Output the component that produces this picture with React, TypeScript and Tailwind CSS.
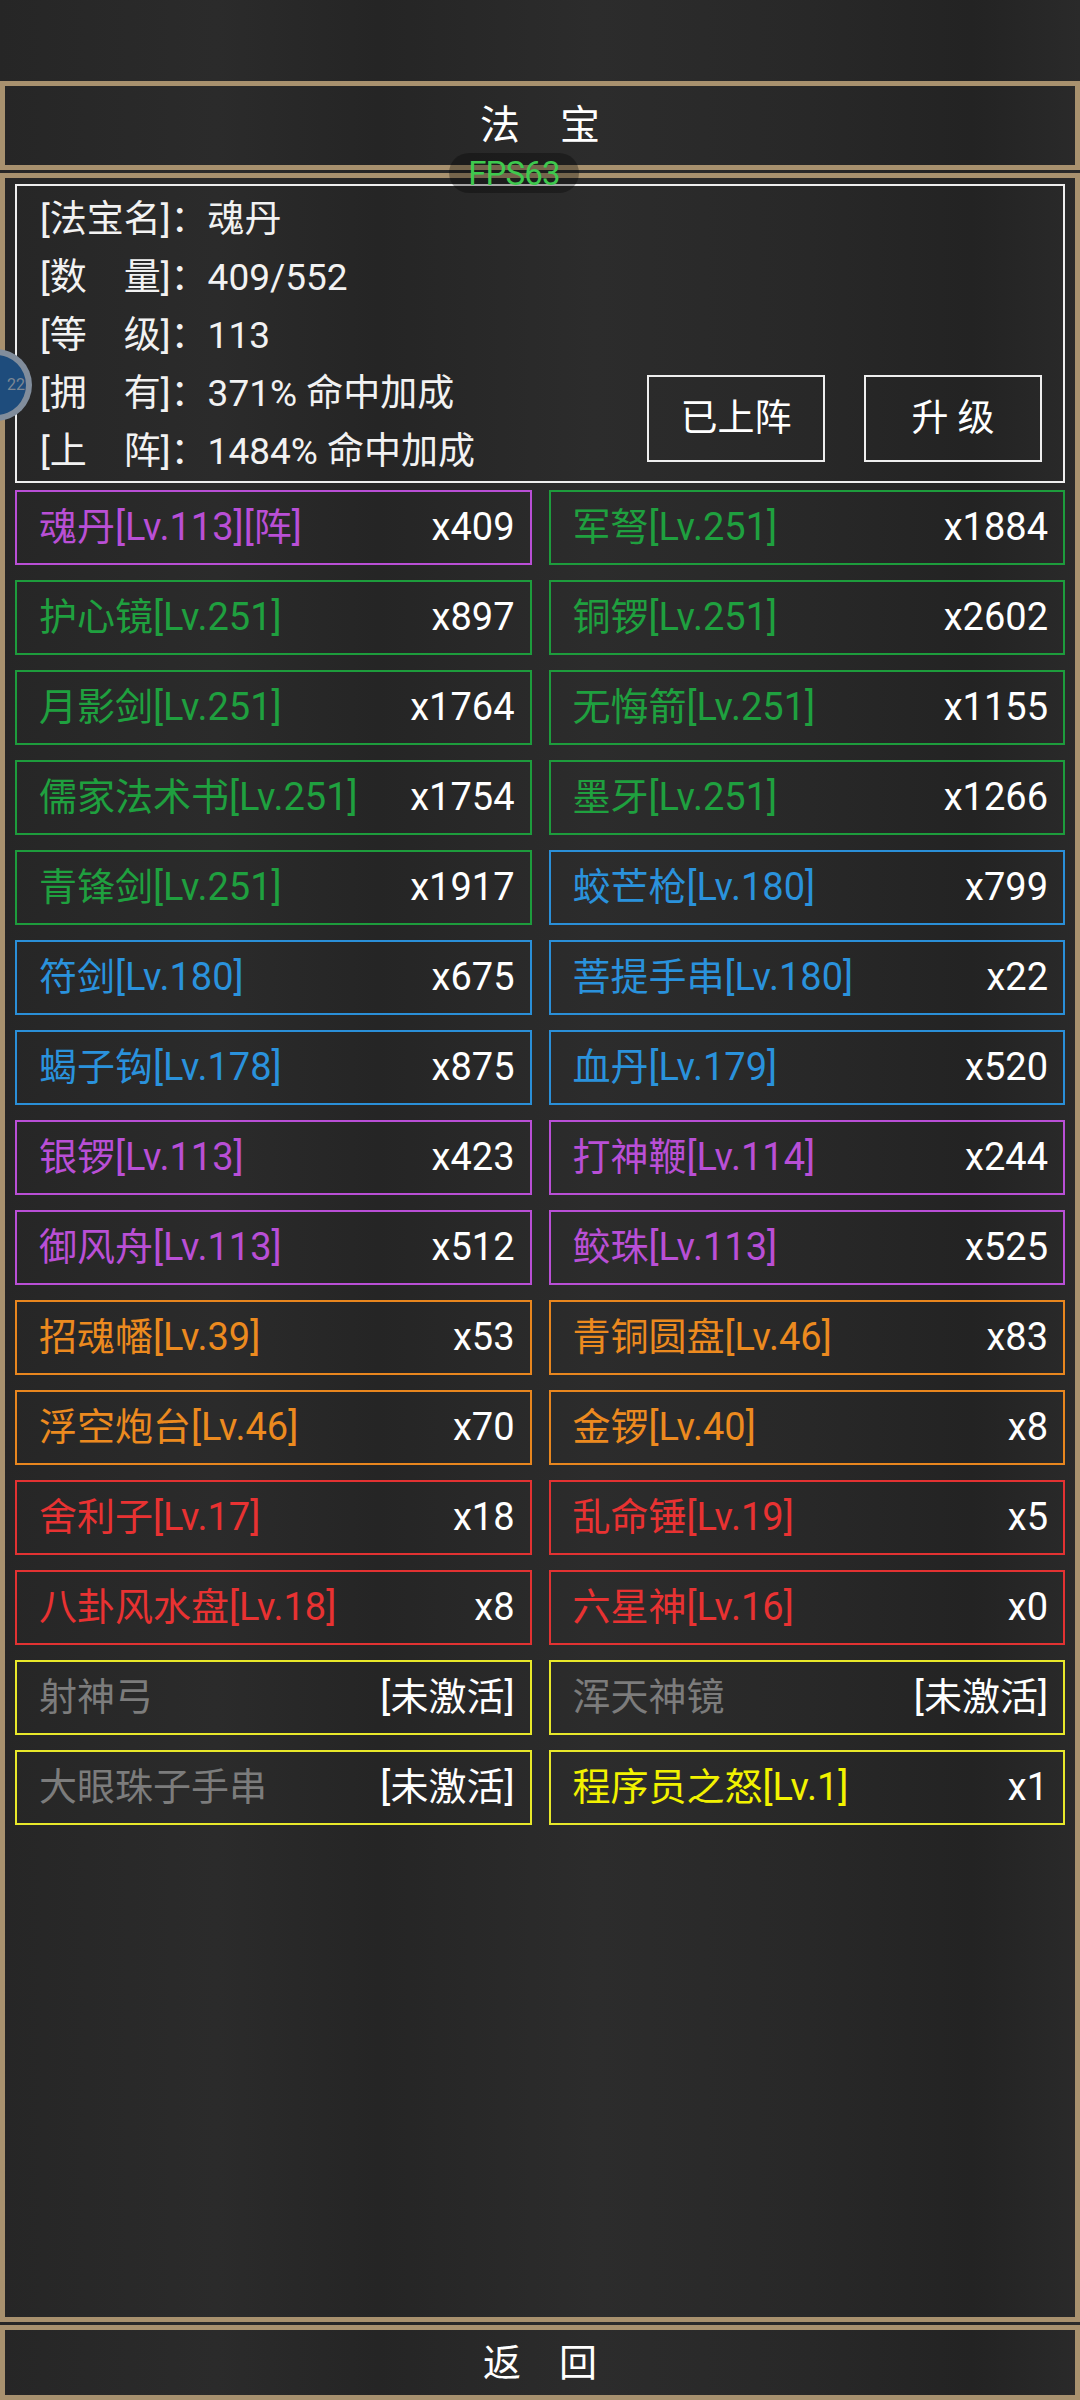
import React from 'react';

type Tier = 'purple' | 'green' | 'blue' | 'orange' | 'red' | 'yellow';

interface Item {
  name: string;
  count: string;
  tier: Tier;
  inactive?: boolean;
}

const TIER_CLASS: Record<Tier, { border: string; text: string }> = {
  purple: { border: 'border-[#b94fd6]', text: 'text-[#b94fd6]' },
  green: { border: 'border-[#1d9c3c]', text: 'text-[#1fa03f]' },
  blue: { border: 'border-[#2a8fd8]', text: 'text-[#2a92dc]' },
  orange: { border: 'border-[#e8861e]', text: 'text-[#ec8a1f]' },
  red: { border: 'border-[#e23232]', text: 'text-[#e83232]' },
  yellow: { border: 'border-[#e8e82a]', text: 'text-[#f2f200]' },
};

const ITEMS: Item[] = [
  { name: '魂丹[Lv.113][阵]', count: 'x409', tier: 'purple' },
  { name: '军弩[Lv.251]', count: 'x1884', tier: 'green' },
  { name: '护心镜[Lv.251]', count: 'x897', tier: 'green' },
  { name: '铜锣[Lv.251]', count: 'x2602', tier: 'green' },
  { name: '月影剑[Lv.251]', count: 'x1764', tier: 'green' },
  { name: '无悔箭[Lv.251]', count: 'x1155', tier: 'green' },
  { name: '儒家法术书[Lv.251]', count: 'x1754', tier: 'green' },
  { name: '墨牙[Lv.251]', count: 'x1266', tier: 'green' },
  { name: '青锋剑[Lv.251]', count: 'x1917', tier: 'green' },
  { name: '蛟芒枪[Lv.180]', count: 'x799', tier: 'blue' },
  { name: '符剑[Lv.180]', count: 'x675', tier: 'blue' },
  { name: '菩提手串[Lv.180]', count: 'x22', tier: 'blue' },
  { name: '蝎子钩[Lv.178]', count: 'x875', tier: 'blue' },
  { name: '血丹[Lv.179]', count: 'x520', tier: 'blue' },
  { name: '银锣[Lv.113]', count: 'x423', tier: 'purple' },
  { name: '打神鞭[Lv.114]', count: 'x244', tier: 'purple' },
  { name: '御风舟[Lv.113]', count: 'x512', tier: 'purple' },
  { name: '鲛珠[Lv.113]', count: 'x525', tier: 'purple' },
  { name: '招魂幡[Lv.39]', count: 'x53', tier: 'orange' },
  { name: '青铜圆盘[Lv.46]', count: 'x83', tier: 'orange' },
  { name: '浮空炮台[Lv.46]', count: 'x70', tier: 'orange' },
  { name: '金锣[Lv.40]', count: 'x8', tier: 'orange' },
  { name: '舍利子[Lv.17]', count: 'x18', tier: 'red' },
  { name: '乱命锤[Lv.19]', count: 'x5', tier: 'red' },
  { name: '八卦风水盘[Lv.18]', count: 'x8', tier: 'red' },
  { name: '六星神[Lv.16]', count: 'x0', tier: 'red' },
  { name: '射神弓', count: '[未激活]', tier: 'yellow', inactive: true },
  { name: '浑天神镜', count: '[未激活]', tier: 'yellow', inactive: true },
  { name: '大眼珠子手串', count: '[未激活]', tier: 'yellow', inactive: true },
  { name: '程序员之怒[Lv.1]', count: 'x1', tier: 'yellow' },
];

const INFO = [
  '[法宝名]：魂丹',
  '[数　量]：409/552',
  '[等　级]：113',
  '[拥　有]：371% 命中加成',
  '[上　阵]：1484% 命中加成',
];

const FONT = { fontFamily: 'Roboto, "Noto Sans CJK SC", sans-serif' };

export default function App() {
  return (
    <div
      className="relative w-[1080px] h-[2400px] overflow-hidden flex flex-col bg-[#2a2a2a] bg-[linear-gradient(90deg,#262626_0%,#2b2b2b_20%,#252525_35%,#2c2c2c_55%,#282828_75%,#232323_90%,#2a2a2a_100%)] text-[#f2f2f2]"
      style={FONT}
    >
      <div className="h-[81px] shrink-0" />

      {/* header */}
      <div className="h-[89px] shrink-0 border-[5px] border-[#a8916e] flex items-center justify-center">
        <span className="text-[40px] leading-none text-white">法　宝</span>
      </div>

      <div className="h-[3px] shrink-0" />

      {/* main panel */}
      <div className="h-[2149px] shrink-0 border-[5px] border-[#a8916e] px-[10px] pt-[6px]">
        <div className="h-[299px] border-2 border-[#eeeeee] flex">
          <div className="flex-1 pt-[5px] pl-[23px] text-[37px] leading-[58px]">
            {INFO.map(line => (
              <div key={line} className="whitespace-pre">{line}</div>
            ))}
          </div>
          <div className="flex items-end gap-[39px] pr-[21px] pb-[19px]">
            <button className="w-[178px] h-[87px] border-2 border-[#eeeeee] text-[37px] text-white">已上阵</button>
            <button className="w-[178px] h-[87px] border-2 border-[#eeeeee] text-[37px] text-white">升 级</button>
          </div>
        </div>

        <div className="mt-[7px] grid grid-cols-2 gap-x-[17px] gap-y-[15px]">
          {ITEMS.map(item => {
            const c = TIER_CLASS[item.tier];
            return (
              <div
                key={item.name}
                className={`h-[75px] border-2 ${c.border} flex items-center justify-between pl-[22px] pr-[15px] text-[38px]`}
              >
                <span className={item.inactive ? 'text-[#7c7c7c]' : c.text}>{item.name}</span>
                <span className="text-white">{item.count}</span>
              </div>
            );
          })}
        </div>
      </div>

      <div className="h-[3px] shrink-0" />

      {/* return */}
      <div className="h-[75px] shrink-0 border-[5px] border-[#a8916e] flex items-center justify-center">
        <span className="text-[38px] leading-none text-white">返　回</span>
      </div>

      {/* FPS badge */}
      <div className="absolute left-[449px] top-[153px] w-[130px] h-[40px] rounded-full bg-black/30 flex items-center justify-center">
        <span className="text-[33px] leading-none text-[#3ec94e] tracking-tight">FPS63</span>
      </div>

      {/* floating bubble */}
      <div className="absolute left-[-40px] top-[349px] w-[72px] h-[72px] rounded-full border-[6px] border-[#9a9ea4]/80 bg-[#1e4c7c] flex items-center justify-end pr-[1px]">
        <span className="text-[16px] text-[#7d8894]">22</span>
      </div>
    </div>
  );
}
